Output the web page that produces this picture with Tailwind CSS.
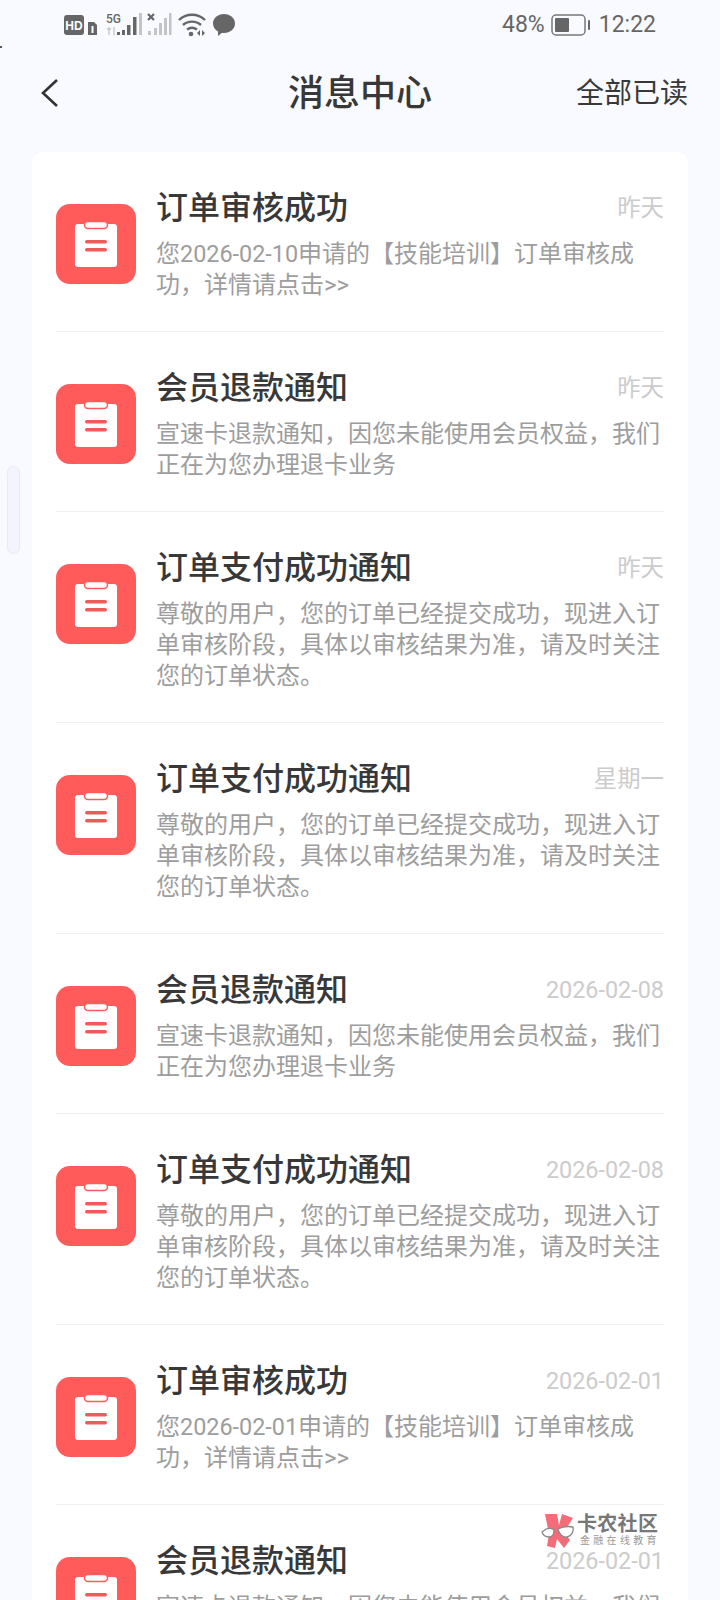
<!DOCTYPE html>
<html lang="en">
<head>
<meta charset="UTF-8">
<meta name="viewport" content="width=device-width, initial-scale=1.0">
<script src="https://cdn.jsdelivr.net/npm/@tailwindcss/browser@4"></script>
<title>消息中心</title>
</head>
<body>
<div class="relative h-[1600px] w-[720px] overflow-hidden bg-[#f9faff] font-['Roboto','Noto_Sans_CJK_SC',sans-serif]">

  <!-- status bar -->
  <div class="flex h-[50px] items-center justify-between pl-[64px] pr-[64px] text-[#666666]">
    <div class="flex items-center">
      <svg width="34" height="22" viewBox="0 0 34 22" class="block">
        <rect x="0" y="1" width="20" height="20" rx="3" fill="#666"/>
        <text x="10" y="16" text-anchor="middle" font-family="Liberation Sans" font-weight="700" font-size="12" fill="#fff">HD</text>
        <path d="M24 8h6l3 3v10h-9z" fill="#666"/>
        <rect x="27.500" y="12" width="2" height="7" fill="#fff"/>
      </svg>
      <svg width="38" height="24" viewBox="0 0 38 24" class="ml-[7px] block">
        <text x="1" y="10" font-family="Roboto" font-weight="500" font-size="12" fill="#666">5G</text>
        <path d="M2 16h4M4 14v8M9 14v8" stroke="#c4c4c4" stroke-width="1.3" fill="none"/>
        <rect x="12" y="19" width="3" height="3" fill="#666"/>
        <rect x="17" y="17" width="3" height="5" fill="#666"/>
        <rect x="22" y="12" width="3.500" height="10" fill="#666"/>
        <rect x="28" y="4" width="3.500" height="18" fill="#666"/>
        <rect x="34" y="0" width="3" height="22" fill="#c4c4c4"/>
      </svg>
      <svg width="26" height="24" viewBox="0 0 26 24" class="ml-[4px] block">
        <path d="M1 1l6 6M7 1l-6 6" stroke="#666" stroke-width="2.200" fill="none"/>
        <rect x="1" y="18" width="3" height="4" fill="#c4c4c4"/>
        <rect x="7" y="15" width="3" height="7" fill="#c4c4c4"/>
        <rect x="12" y="10" width="3" height="12" fill="#c4c4c4"/>
        <rect x="17" y="5" width="3" height="17" fill="#c4c4c4"/>
        <rect x="22" y="0" width="2.500" height="22" fill="#c4c4c4"/>
      </svg>
      <svg width="30" height="24" viewBox="0 0 30 24" class="ml-[5px] block">
        <path d="M1 7c7-7 19-7 26 0" stroke="#666" stroke-width="2.400" fill="none"/>
        <path d="M5 12c5-4.500 13-4.500 18 0" stroke="#666" stroke-width="2.400" fill="none"/>
        <path d="M9 16.500c3-2.200 7-2.200 10 0" stroke="#666" stroke-width="2.400" fill="none"/>
        <circle cx="13" cy="21" r="2.300" fill="#666"/>
        <path d="M19 20l3-3v6zM24 17l3 3-3 3z" fill="#666"/>
      </svg>
      <svg width="24" height="24" viewBox="0 0 24 24" class="ml-[4px] block">
        <path d="M12 1c6.300 0 11 4.300 11 9.500S18.300 20 12 20c-.7 0-1.400-.1-2-.2L6 23v-4.500C3 16.800 1 13.900 1 10.500 1 5.300 5.700 1 12 1z" fill="#666"/>
      </svg>
    </div>
    <div class="flex items-center">
      <span class="text-[23px] leading-[28px]">48%</span>
      <svg width="40" height="22" viewBox="0 0 40 22" class="ml-[6px] block">
        <rect x="1" y="1" width="33" height="20" rx="4" fill="none" stroke="#777" stroke-width="1.500"/>
        <rect x="4" y="4" width="14" height="14" rx="1" fill="#666"/>
        <rect x="37" y="6" width="2" height="10" rx="1" fill="#666"/>
      </svg>
      <span class="ml-[8px] text-[23px] leading-[28px]">12:22</span>
    </div>
  </div>

  <!-- header -->
  <div class="relative flex h-[88px] items-center justify-center">
    <svg width="20" height="30" viewBox="0 0 20 30" class="absolute left-[40px] top-[28px]">
      <path d="M17 2L3 15l14 13" fill="none" stroke="#333" stroke-width="2.600"/>
    </svg>
    <div class="text-[36px] font-medium leading-[44px] text-[#383838]">消息中心</div>
    <div class="absolute right-[32px] text-[28px] leading-[36px] text-[#383838]">全部已读</div>
  </div>

  <!-- list, rows are filled in below -->
  <div id="list" class="mx-[32px] mt-[14px] rounded-[10px] bg-white px-[24px]"></div>

  <!-- edge handle -->
  <div class="absolute left-[7px] top-[466px] h-[88px] w-[13px] rounded-full border border-[#e9ebf3] bg-[#f3f4fd]"></div>
  <div class="absolute left-0 top-[46px] h-[2px] w-[2px] bg-[#555555]"></div>

  <!-- watermark -->
  <div class="absolute left-[540px] top-[1513px] flex items-start">
    <svg width="36" height="36" viewBox="0 0 36 36" class="block">
      <path d="M5 1h12l2 11 3-11 11 4-9 14 6 8-6 8-7-9-2 9-8-2 2-12-2-10z" fill="#f26d78"/>
      <path d="M2 19l4-3c3-1 6-1 8 1 0 4-2 7-5 7-3 0-6-2-7-5zM18 16c4-2 10-3 15-2 1 4-1 9-6 10-4 1-8-3-9-8z" fill="#fff" stroke="#888" stroke-width="1.300"/>
    </svg>
    <div class="ml-[1px]">
      <div class="text-[20px] font-bold leading-[22px] tracking-[0.3px] text-[#777777]">卡农社区</div>
      <div class="ml-[3px] whitespace-nowrap text-[10px] leading-[12px] tracking-[3.300px] text-[#999999]">金融在线教育</div>
    </div>
  </div>
</div>

<script>
  const refund = '宣速卡退款通知，因您未能使用会员权益，我们正在为您办理退卡业务';
  const paid = '尊敬的用户，您的订单已经提交成功，现进入订单审核阶段，具体以审核结果为准，请及时关注您的订单状态。';
  const audit = d => `您<span class="text-[23.4px]">${d}</span>申请的【技能培训】订单审核成功，详情请点击&gt;&gt;`;
  const rows = [
    ['订单审核成功', '昨天', audit('2026-02-10')],
    ['会员退款通知', '昨天', refund],
    ['订单支付成功通知', '昨天', paid],
    ['订单支付成功通知', '星期一', paid],
    ['会员退款通知', '2026-02-08', refund],
    ['订单支付成功通知', '2026-02-08', paid],
    ['订单审核成功', '2026-02-01', audit('2026-02-01')],
    ['会员退款通知', '2026-02-01', refund],
  ];
  const icon = `<svg width="80" height="80" viewBox="0 0 80 80" class="block shrink-0">
    <rect width="80" height="80" rx="14" fill="#ff5b5b"/>
    <rect x="19" y="20" width="42" height="43" rx="3" fill="#fff"/>
    <rect x="28.500" y="17.500" width="23" height="7" rx="3.500" fill="#fff" stroke="#ff5b5b" stroke-width="1.500"/>
    <rect x="29" y="36" width="22" height="3.500" rx="1.700" fill="#f05a5a"/>
    <rect x="29" y="44" width="22" height="3.500" rx="1.700" fill="#f05a5a"/>
  </svg>`;
  document.getElementById('list').innerHTML = rows.map((r, i) => `
    <div class="flex ${i < rows.length - 1 ? 'border-b' : ''} border-[#f0f0f0] pb-[30px] pt-[36px]">
      <div class="mt-[16px]">${icon}</div>
      <div class="ml-[20px] min-w-0 flex-1">
        <div class="flex h-[40px] items-center justify-between">
          <div class="text-[32px] font-medium leading-[40px] text-[#383838]">${r[0]}</div>
          <div class="text-[23.4px] leading-[32px] text-[#cccccc]">${r[1]}</div>
        </div>
        <div class="mt-[11px] text-[24px] leading-[31px] text-[#9d9d9d]">${r[2]}</div>
      </div>
    </div>`).join('');
</script>
</body>
</html>
